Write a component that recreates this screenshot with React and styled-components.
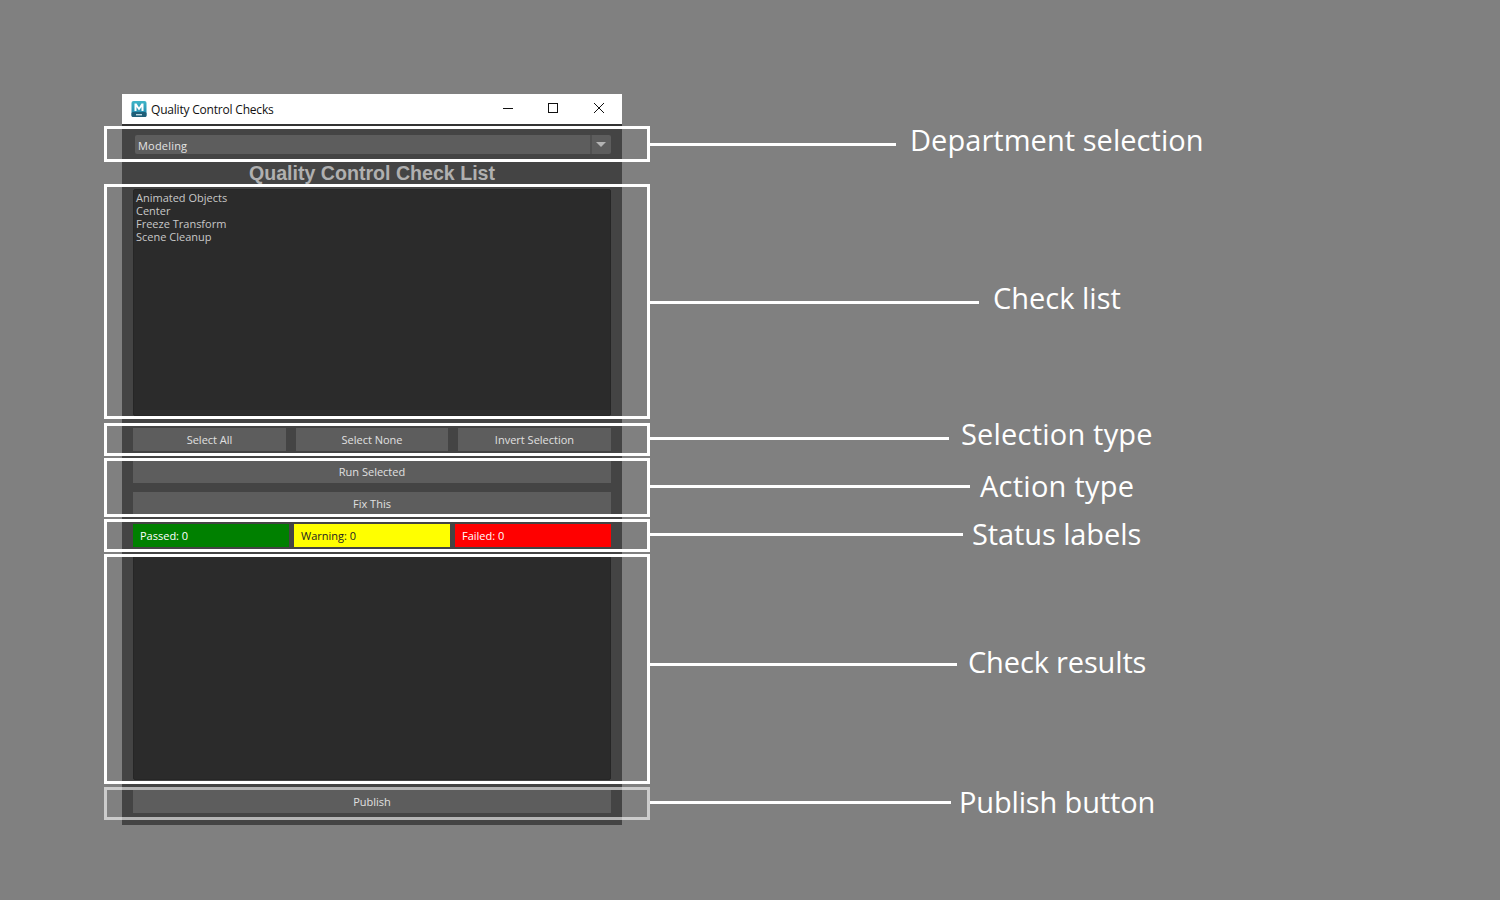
import React from "react";
import styled, { createGlobalStyle } from "styled-components";

const callouts = [
  { label: "Department selection", top: 126, height: 36, lineY: 17, lineWidth: 246, gap: 14, labelShift: -5, spacing: 0.05 },
  { label: "Check list", top: 184, height: 235, lineY: 117, lineWidth: 329, gap: 14, labelShift: -5, spacing: 0 },
  { label: "Selection type", top: 423, height: 33, lineY: 14, lineWidth: 299, gap: 12, labelShift: -5, spacing: 0.2 },
  { label: "Action type", top: 458, height: 59, lineY: 27, lineWidth: 320, gap: 10, labelShift: -1, spacing: 0.25 },
  { label: "Status labels", top: 519, height: 33, lineY: 14, lineWidth: 313, gap: 9, labelShift: -1, spacing: -0.1 },
  { label: "Check results", top: 554, height: 230, lineY: 109, lineWidth: 307, gap: 11, labelShift: -3, spacing: -0.15 },
  { label: "Publish button", top: 787, height: 33, lineY: 14, lineWidth: 301, gap: 8, labelShift: -1, spacing: -0.15, faded: true },
];

function MayaIcon() {
  return (
    <svg width="16" height="16" viewBox="0 0 16 16">
      <defs>
        <linearGradient id="maya" x1="0" y1="0" x2="0" y2="1">
          <stop offset="0" stopColor="#3fb6c9" />
          <stop offset="1" stopColor="#1c7fa6" />
        </linearGradient>
      </defs>
      <rect x="0.5" y="0" width="15" height="16" rx="2" fill="url(#maya)" />
      <rect x="0.5" y="11" width="15" height="5" rx="1.5" fill="#1f5f78" />
      <path d="M3.500 10V2.500h2L8 6.500l2.500-4h2V10h-2V6L8 9.500 5.500 6v4z" fill="#fff" />
      <rect x="5" y="13" width="6" height="1.400" fill="#bcd8e2" />
    </svg>
  );
}

export default function App() {
  return (
    <Page>
      <GlobalStyle />
      <Window>
        <TitleBar>
          <MayaIcon />
          <WindowTitle>Quality Control Checks</WindowTitle>
          <WindowControls>
            <svg width="12" height="12" viewBox="0 0 12 12">
              <path d="M1 6.500h10" stroke="#111" strokeWidth="1" />
            </svg>
            <svg width="12" height="12" viewBox="0 0 12 12">
              <rect x="1.500" y="1.500" width="9" height="9" fill="none" stroke="#111" strokeWidth="1" />
            </svg>
            <svg width="12" height="12" viewBox="-1 0 12 12" overflow="visible">
              <path d="M1 1l10 10M11 1L1 11" stroke="#111" strokeWidth="1" />
            </svg>
          </WindowControls>
        </TitleBar>
        <Body>
          <Combo>
            <ComboText>Modeling</ComboText>
            <ComboArrow />
          </Combo>
          <Heading>Quality Control Check List</Heading>
          <ListBox $height={227}>
            <ListItem>Animated Objects</ListItem>
            <ListItem>Center</ListItem>
            <ListItem>Freeze Transform</ListItem>
            <ListItem>Scene Cleanup</ListItem>
          </ListBox>
          <ButtonRow $mt={12}>
            <Button>Select All</Button>
            <Button>Select None</Button>
            <Button>Invert Selection</Button>
          </ButtonRow>
          <Button $mt={9}>Run Selected</Button>
          <Button $mt={9}>Fix This</Button>
          <StatusRow>
            <StatusLabel $bg="#008000" $fg="#fff">Passed: 0</StatusLabel>
            <StatusLabel $bg="#ffff00" $fg="#222">Warning: 0</StatusLabel>
            <StatusLabel $bg="#ff0000" $fg="#fff">Failed: 0</StatusLabel>
          </StatusRow>
          <ListBox $height={224} $mt={9} />
          <Button $mt={10}>Publish</Button>
        </Body>
      </Window>
      {callouts.map((c) => (
        <Frame key={c.label} $top={c.top} $height={c.height} $faded={c.faded}>
          <Callout $y={c.lineY}>
            <Line $width={c.lineWidth} />
            <CalloutLabel $gap={c.gap} $shift={c.labelShift} $spacing={c.spacing}>
              {c.label}
            </CalloutLabel>
          </Callout>
        </Frame>
      ))}
    </Page>
  );
}

const GlobalStyle = createGlobalStyle`
  html, body {
    margin: 0;
    padding: 0;
    background: #808080;
  }
`;
const Page = styled.div`
  position: relative;
  width: 1500px;
  height: 900px;
  padding: 94px 0 0 122px;
  box-sizing: border-box;
  background: #808080;
  overflow: hidden;
`;
const Window = styled.div`
  width: 500px;
  background: #444444;
  font-family: "Open Sans", sans-serif;
`;
const TitleBar = styled.div`
  height: 30px;
  display: flex;
  align-items: center;
  padding-left: 9px;
  background: #ffffff;
  border-bottom: 2px solid #333333;
  box-sizing: content-box;
`;
const WindowTitle = styled.div`
  margin-left: 4px;
  font-family: "Open Sans", sans-serif;
  font-size: 12px;
  letter-spacing: -0.2px;
  color: #111111;
`;
const WindowControls = styled.div`
  margin-left: auto;
  margin-right: 18px;
  display: flex;
  gap: 33px;
  margin-top: -3px;
`;
const Body = styled.div`
  display: flex;
  flex-direction: column;
  padding: 9px 11px 12px;
  height: 699px;
  box-sizing: border-box;
`;
const Combo = styled.div`
  height: 19px;
  margin-left: 2px;
  display: flex;
  align-items: stretch;
  background: #5d5d5d;
  border-radius: 2px;
`;
const ComboText = styled.div`
  flex: 1;
  padding-left: 3px;
  font-size: 11px;
  letter-spacing: 0.2px;
  line-height: 21px;
  color: #e4e4e4;
`;
const ComboArrow = styled.div`
  width: 19px;
  border-left: 2px solid #505050;
  position: relative;
  &::after {
    content: "";
    position: absolute;
    left: 4px;
    top: 7px;
    border-left: 5px solid transparent;
    border-right: 5px solid transparent;
    border-top: 5px solid #b4b4b4;
  }
`;
const Heading = styled.div`
  height: 35px;
  line-height: 38px;
  text-align: center;
  font-family: "Liberation Sans", sans-serif;
  font-size: 19.6px;
  font-weight: 700;
  color: #b0b0b0;
`;
const ListBox = styled.div`
  height: ${(p) => p.$height}px;
  margin-top: ${(p) => p.$mt || 0}px;
  box-sizing: border-box;
  padding: 1px 2px;
  background: #2b2b2b;
  border: 1px solid #262626;
  border-radius: 2px;
`;
const ListItem = styled.div`
  font-size: 11px;
  line-height: 13px;
  color: #c8c8c8;
`;
const ButtonRow = styled.div`
  display: grid;
  grid-template-columns: 153px 152px 153px;
  gap: 10px;
  margin-top: ${(p) => p.$mt || 0}px;
`;
const Button = styled.div`
  height: 23px;
  margin-top: ${(p) => p.$mt || 0}px;
  display: flex;
  align-items: center;
  justify-content: center;
  background: #5d5d5d;
  font-size: 11px;
  box-sizing: border-box;
  color: #e0e0e0;
`;
const StatusRow = styled.div`
  display: grid;
  grid-template-columns: repeat(3, 156px);
  gap: 5px;
  margin-top: 9px;
`;
const StatusLabel = styled.div`
  height: 23px;
  display: flex;
  align-items: center;
  padding-left: 7px;
  box-sizing: border-box;
  background: ${(p) => p.$bg};
  color: ${(p) => p.$fg};
  font-size: 11px;
`;
const Frame = styled.div`
  position: absolute;
  left: 104px;
  top: ${(p) => p.$top}px;
  width: 546px;
  height: ${(p) => p.$height}px;
  box-sizing: border-box;
  border: 3px solid ${(p) => (p.$faded ? "rgba(255,255,255,0.6)" : "#ffffff")};
`;
const Callout = styled.div`
  position: absolute;
  left: 543px;
  top: ${(p) => p.$y - 3}px;
  height: 3px;
  display: flex;
  align-items: center;
`;
const Line = styled.div`
  width: ${(p) => p.$width}px;
  height: 3px;
  background: #ffffff;
`;
const CalloutLabel = styled.div`
  margin-left: ${(p) => p.$gap}px;
  position: relative;
  top: ${(p) => p.$shift}px;
  font-family: "Open Sans", sans-serif;
  font-size: 29px;
  letter-spacing: ${(p) => p.$spacing}px;
  line-height: 40px;
  color: #ffffff;
  white-space: nowrap;
`;
